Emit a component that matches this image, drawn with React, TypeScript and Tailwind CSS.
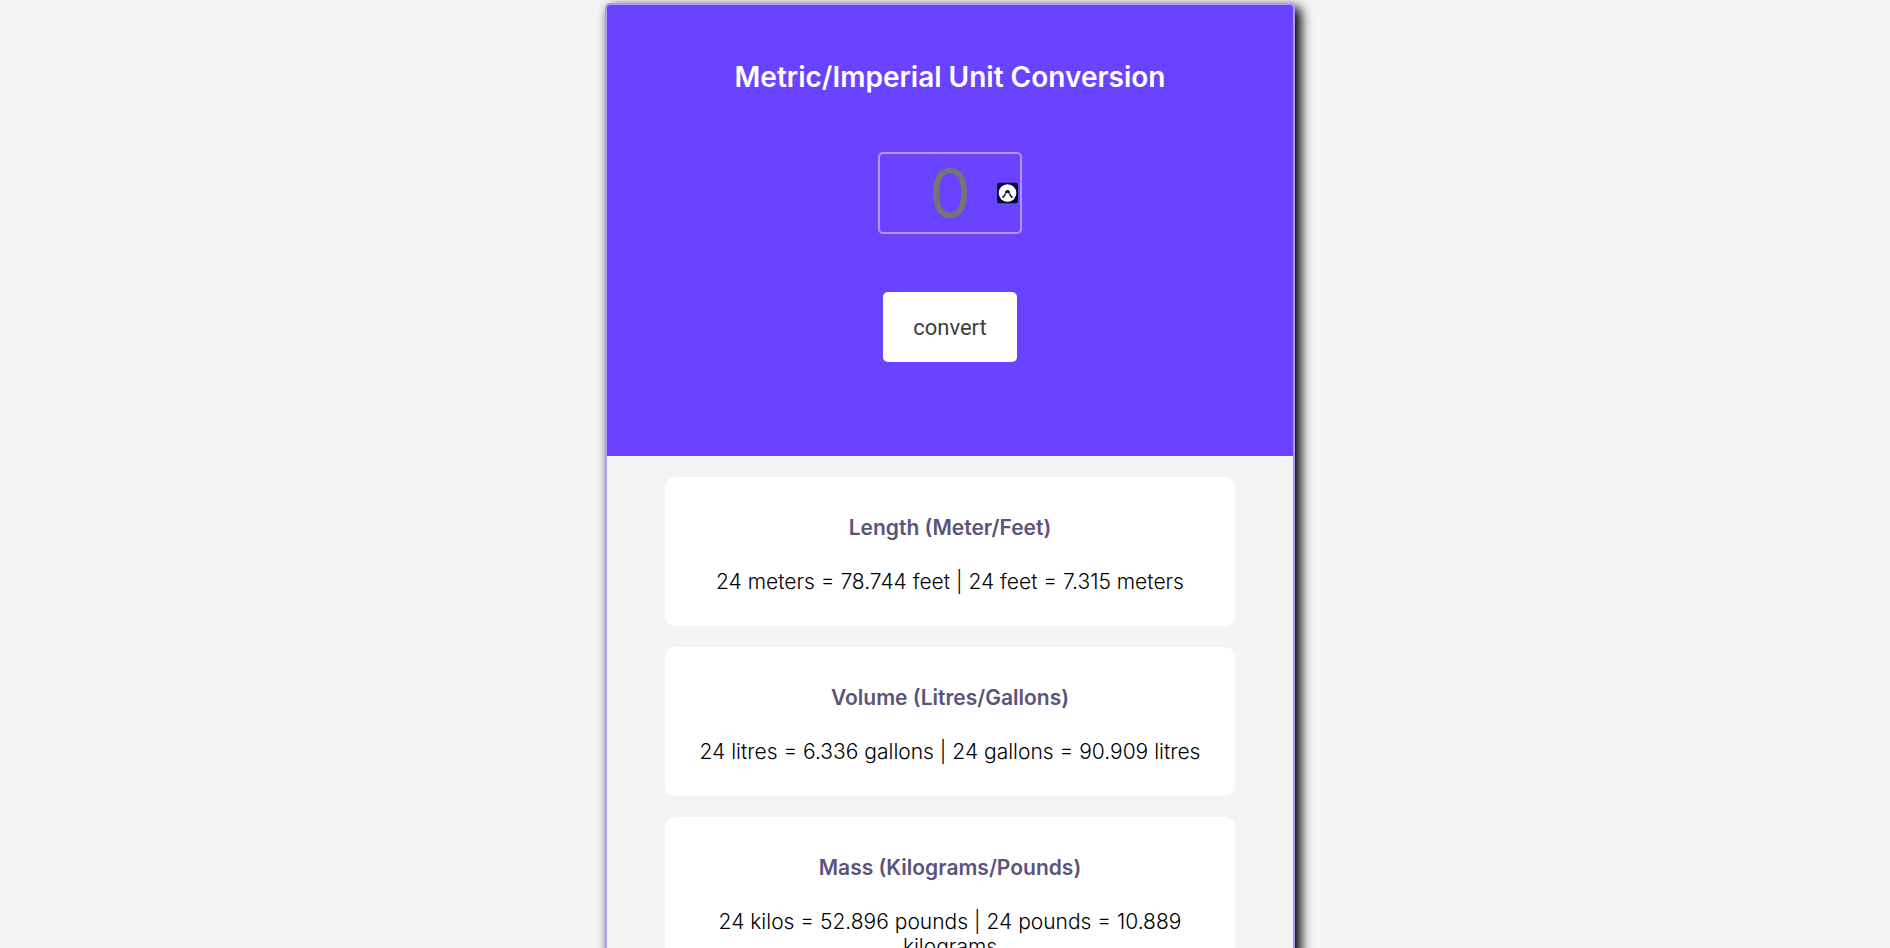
import { useState } from "react";

type Reading = { title: string; text: string };

function round(value: number) {
  return value.toFixed(3);
}

function getReadings(n: number): Reading[] {
  return [
    {
      title: "Length (Meter/Feet)",
      text: `${n} meters = ${round(n * 3.281)} feet | ${n} feet = ${round(n / 3.281)} meters`,
    },
    {
      title: "Volume (Litres/Gallons)",
      text: `${n} litres = ${round(n * 0.264)} gallons | ${n} gallons = ${round(n / 0.264)} litres`,
    },
    {
      title: "Mass (Kilograms/Pounds)",
      text: `${n} kilos = ${round(n * 2.204)} pounds | ${n} pounds = ${round(n / 2.204)} kilograms`,
    },
  ];
}

function AutofillBadge() {
  return (
    <svg
      viewBox="0 0 21 21"
      className="pointer-events-none absolute top-1/2 right-1 size-[21px] -translate-y-1/2"
      aria-hidden="true"
    >
      <rect width="21" height="21" rx="3" fill="#030b38" />
      <circle cx="10.5" cy="10.5" r="8.8" fill="#fff" />
      <path
        d="M5.2 14.4h1.3l2-3.2M15.8 14.4h-1.3l-2-3.2"
        fill="none"
        stroke="#15151c"
        strokeWidth="1.5"
      />
      <path d="M8 10.4a2.5 3 0 0 1 5 0l-1 .9-1.5-1.1-1.5 1.1z" fill="#15151c" />
    </svg>
  );
}

export default function App() {
  const [draft, setDraft] = useState("");
  const [amount, setAmount] = useState(24);

  return (
    <div className="min-h-screen overflow-hidden bg-[#f4f4f4] pt-[3px] pr-4 pl-[26px] font-['Inter',sans-serif]">
      <main className="mx-auto max-w-[690px] rounded-[5px] border-2 border-[#b295ff] bg-[#f4f4f4] pb-5 text-center shadow-[5px_5px_12px_1px_#000]">
        <form
          className="flex flex-col items-center rounded-t-[3px] bg-[#6943ff] pt-[55px] pb-[94px]"
          onSubmit={(e) => {
            e.preventDefault();
            setAmount(Number(draft) || 0);
          }}
        >
          <h1 className="text-[28px] leading-[35px] font-semibold text-white">
            <label htmlFor="amount">Metric/Imperial Unit Conversion</label>
          </h1>
          <div className="relative mt-[57px] w-36">
            <input
              id="amount"
              inputMode="decimal"
              placeholder="0"
              value={draft}
              onChange={(e) => setDraft(e.target.value)}
              className="block h-[82px] w-full rounded-[5px] border-2 border-[#b295ff] bg-transparent text-center text-[66px] text-white placeholder:text-[#757575] focus:outline-none"
            />
            <AutofillBadge />
          </div>
          <button
            type="submit"
            className="mt-[58px] h-[70px] w-[134px] rounded-[5px] bg-white font-['Roboto',sans-serif] text-[22px] text-[#3d3d3d]"
          >
            convert
          </button>
        </form>

        <div className="mx-auto mt-[21px] flex w-11/12 max-w-[570px] flex-col gap-[21px]">
          {getReadings(amount).map(({ title, text }) => (
            <section key={title} className="rounded-[10px] bg-white px-5 pt-[38px] pb-8">
              <h2 className="text-[21px] leading-[26px] font-semibold text-[#5a537b]">{title}</h2>
              <p className="mt-7 text-[21px] leading-[25px] font-light text-black">{text}</p>
            </section>
          ))}
        </div>
      </main>
    </div>
  );
}
